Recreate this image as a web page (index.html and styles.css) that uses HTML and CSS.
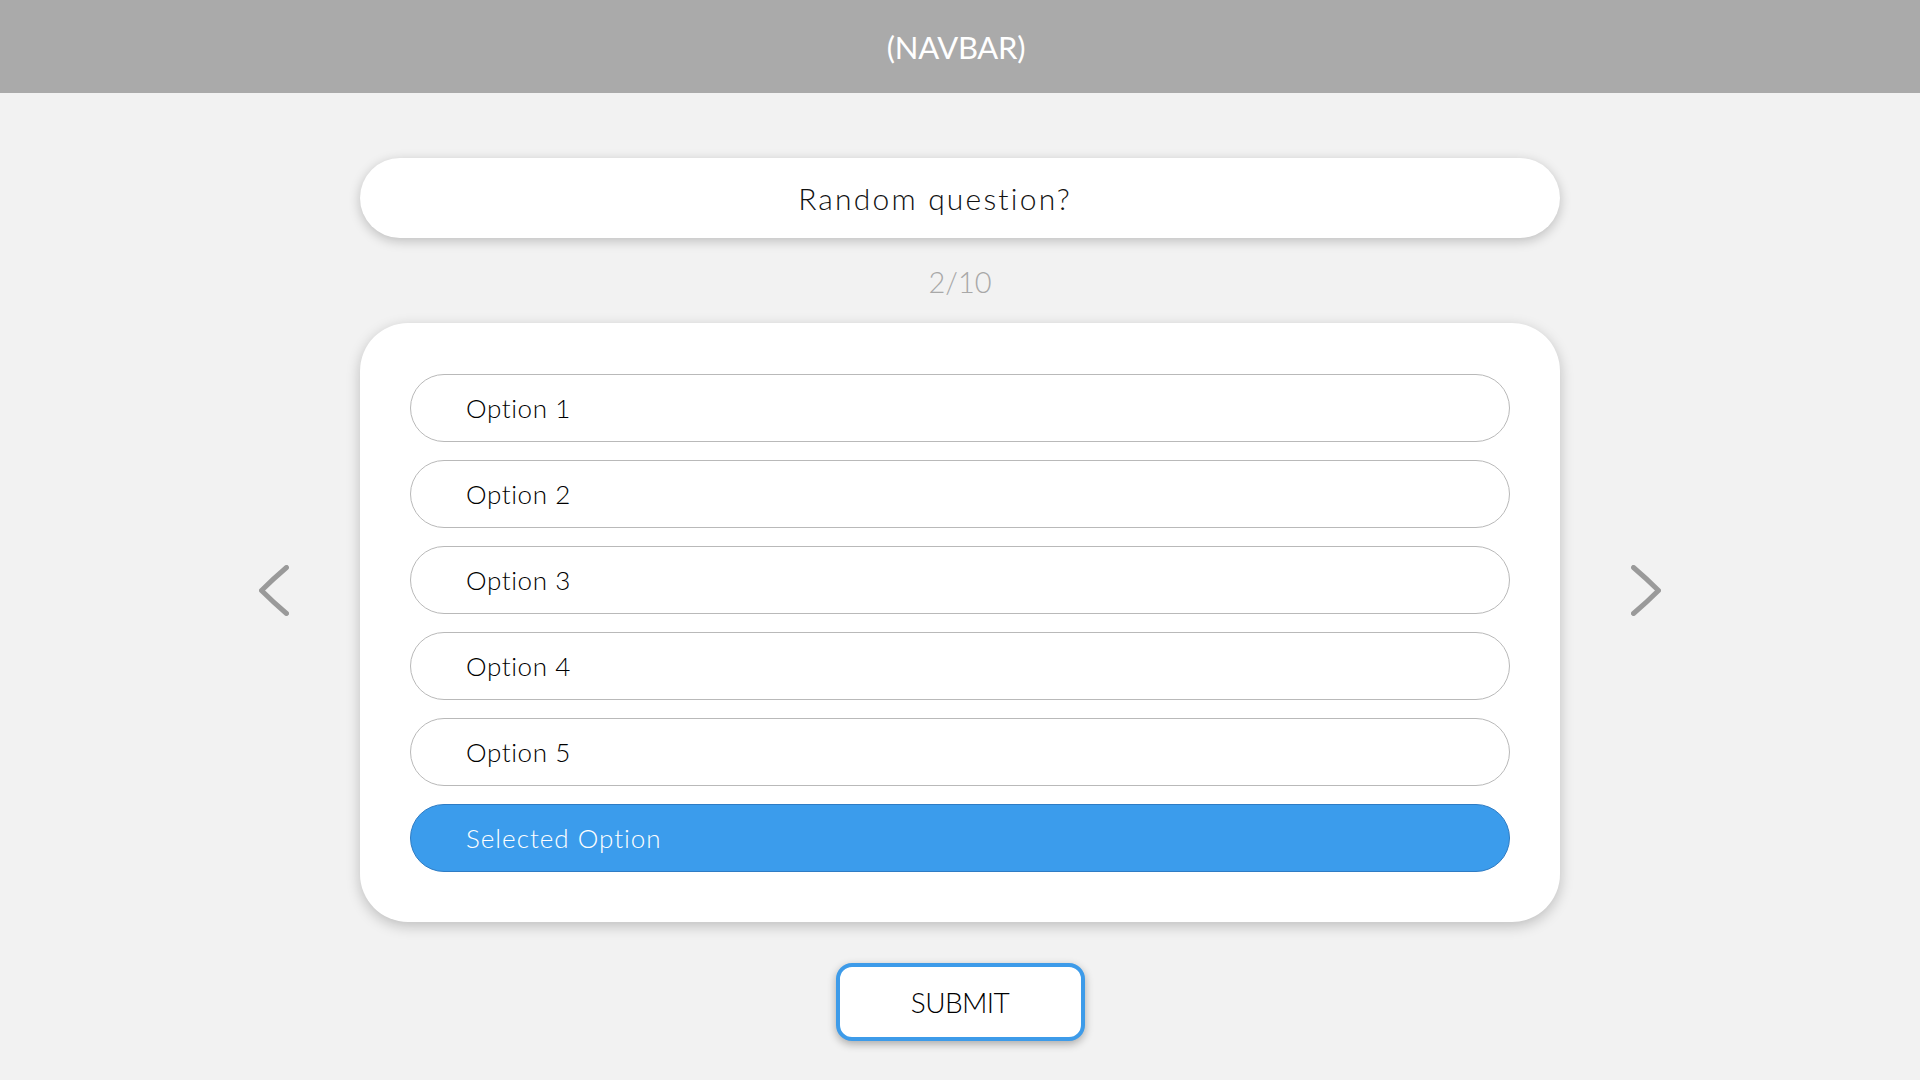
FILE: index.html
```html
<!DOCTYPE html>
<html lang="en">
<head>
<meta charset="utf-8">
<title>Quiz</title>
<link rel="stylesheet" href="styles.css">
</head>
<body>
<header class="navbar">(NAVBAR)</header>
<main class="main">
  <div class="question">Random question?</div>
  <div class="counter">2/10</div>
  <div class="row">
    <button class="arrow" aria-label="Previous">
      <svg width="30" height="51" viewBox="0 0 30 51"><path d="M27.5 2.5 Q14 14 2.5 25.5 Q14 37 27.5 48.5" fill="none" stroke="#9a9a9a" stroke-width="5" stroke-linecap="round" stroke-linejoin="round"/></svg>
    </button>
    <section class="card">
      <div class="option">Option 1</div>
      <div class="option">Option 2</div>
      <div class="option">Option 3</div>
      <div class="option">Option 4</div>
      <div class="option">Option 5</div>
      <div class="option selected">Selected Option</div>
    </section>
    <button class="arrow" aria-label="Next">
      <svg width="30" height="51" viewBox="0 0 30 51"><path d="M2.5 2.5 Q16 14 27.5 25.5 Q16 37 2.5 48.5" fill="none" stroke="#9a9a9a" stroke-width="5" stroke-linecap="round" stroke-linejoin="round"/></svg>
    </button>
  </div>
  <button class="submit">SUBMIT</button>
</main>
</body>
</html>
```
FILE: styles.css
```css
html, body {
  margin: 0;
  padding: 0;
}
body {
  background: #f2f2f2;
  font-family: "Lato", "Open Sans", sans-serif;
  font-weight: 300;
  color: #000;
  min-height: 1080px;
}
.navbar {
  height: 93px;
  background: #aaaaaa;
  color: #fff;
  display: flex;
  align-items: center;
  justify-content: center;
  padding-right: 8px;
  font-size: 31px;
  font-weight: 400;
  letter-spacing: -0.3px;
}
.main {
  display: flex;
  flex-direction: column;
  align-items: center;
}
.question {
  margin-top: 65px;
  width: 1200px;
  height: 80px;
  box-sizing: border-box;
  background: #fff;
  border-radius: 40px;
  box-shadow: 0 3px 12px rgba(0, 0, 0, 0.22);
  display: flex;
  align-items: center;
  justify-content: center;
  padding-right: 50px;
  font-size: 30px;
  letter-spacing: 2.2px;
  color: #111;
}
.counter {
  height: 85px;
  box-sizing: border-box;
  padding-top: 2px;
  display: flex;
  align-items: center;
  font-size: 29px;
  color: #a8a8a8;
}
.row {
  display: flex;
  align-items: flex-start;
  gap: 71px;
}
.arrow {
  margin-top: 242px;
  padding: 0;
  border: 0;
  background: none;
  width: 30px;
  height: 51px;
  display: block;
}
.arrow svg {
  display: block;
}
.card {
  width: 1200px;
  box-sizing: border-box;
  background: #fff;
  border-radius: 48px;
  box-shadow: 0 4px 14px rgba(0, 0, 0, 0.22);
  padding: 51px 50px 50px;
  display: flex;
  flex-direction: column;
  gap: 18px;
}
.option {
  height: 68px;
  box-sizing: border-box;
  border: 1px solid #b9b9b9;
  border-radius: 34px;
  display: flex;
  align-items: center;
  padding-left: 55px;
  font-size: 26px;
  letter-spacing: 0.6px;
  color: #000;
}
.option.selected {
  background: #3b9cec;
  border-color: #2f7cc4;
  color: #fff;
  letter-spacing: 1px;
}
.submit {
  margin-top: 41px;
  width: 249px;
  height: 78px;
  box-sizing: border-box;
  border: 4px solid #3d9be9;
  border-radius: 16px;
  background: #fff;
  box-shadow: 0 3px 8px rgba(0, 0, 0, 0.3);
  font-family: "Lato", "Open Sans", sans-serif;
  font-weight: 300;
  font-size: 28px;
  letter-spacing: -0.6px;
  color: #000;
  padding: 0;
}
```
